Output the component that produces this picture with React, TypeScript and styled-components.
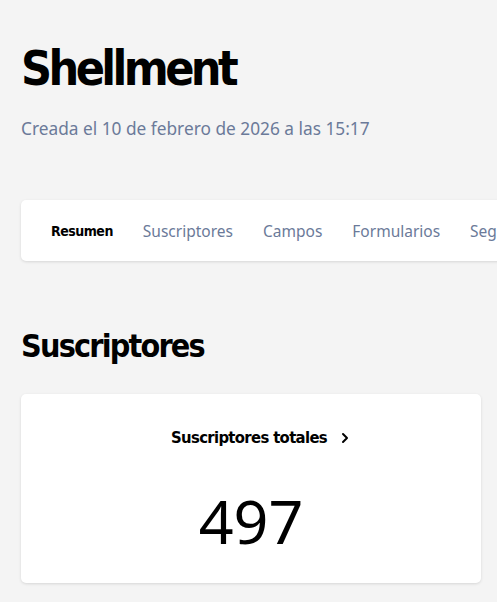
import React from 'react';
import styled, { createGlobalStyle } from 'styled-components';

const GlobalStyle = createGlobalStyle`
  html, body {
    margin: 0;
    padding: 0;
    background-color: #f4f4f4;
    overflow: hidden;
  }
  body {
    font-family: "Noto Sans", "Liberation Sans", sans-serif;
    color: #000;
  }
`;

const condensed = `
  font-family: "DejaVu Sans", sans-serif;
  font-stretch: condensed;
  font-weight: 700;
`;

const Page = styled.div`
  padding: 40px 16px 20px 21px;
  width: 497px;
  box-sizing: border-box;
`;

const Title = styled.h1`
  margin: 0;
  ${condensed}
  font-size: 48px;
  line-height: 56px;
  letter-spacing: -3.6px;
`;

const Subtitle = styled.p`
  margin: 21px 0 0;
  font-size: 17.3px;
  line-height: 24px;
  color: #6b7a99;
`;

const TabsCard = styled.nav`
  margin-top: 59px;
  margin-right: -60px;
  height: 61px;
  background: #fff;
  border-radius: 5px;
  box-shadow: 0 1px 3px rgba(0, 0, 0, 0.12);
  display: flex;
  align-items: center;
  padding-left: 30px;
  gap: 30px;
  white-space: nowrap;
  overflow: hidden;
`;

const Tab = styled.span<{ $active?: boolean }>`
  font-size: 15.5px;
  font-weight: 400;
  color: #6b7a99;
  ${(p) => p.$active && `${condensed} color: #000; font-size: 14px; letter-spacing: -0.5px;`}
`;

const SectionTitle = styled.h2`
  margin: 65px 0 0;
  ${condensed}
  font-size: 32px;
  line-height: 40px;
  letter-spacing: -1.8px;
`;

const StatCard = styled.div`
  margin-top: 28px;
  height: 189px;
  background: #fff;
  border-radius: 5px;
  box-shadow: 0 1px 3px rgba(0, 0, 0, 0.12);
  display: flex;
  flex-direction: column;
  align-items: center;
  padding-top: 33px;
  box-sizing: border-box;
`;

const StatLabel = styled.div`
  display: flex;
  align-items: center;
  gap: 12px;
  ${condensed}
  font-size: 16.5px;
  line-height: 22px;
  letter-spacing: -0.65px;
  padding-left: 20px;
`;

const StatValue = styled.div`
  margin-top: 41px;
  font-size: 61px;
  line-height: 62px;
  font-weight: 400;
`;

function Chevron() {
  return (
    <svg width="12" height="12" viewBox="0 0 12 12" fill="none">
      <path d="M4 2l4 4-4 4" stroke="#000" strokeWidth="2" strokeLinecap="round" strokeLinejoin="round" />
    </svg>
  );
}

export default function App() {
  return (
    <>
      <GlobalStyle />
      <Page>
        <Title>Shellment</Title>
        <Subtitle>Creada el 10 de febrero de 2026 a las 15:17</Subtitle>
        <TabsCard>
          <Tab $active>Resumen</Tab>
          <Tab>Suscriptores</Tab>
          <Tab>Campos</Tab>
          <Tab>Formularios</Tab>
          <Tab>Segmentos</Tab>
        </TabsCard>
        <SectionTitle>Suscriptores</SectionTitle>
        <StatCard>
          <StatLabel>
            Suscriptores totales
            <Chevron />
          </StatLabel>
          <StatValue>497</StatValue>
        </StatCard>
      </Page>
    </>
  );
}
